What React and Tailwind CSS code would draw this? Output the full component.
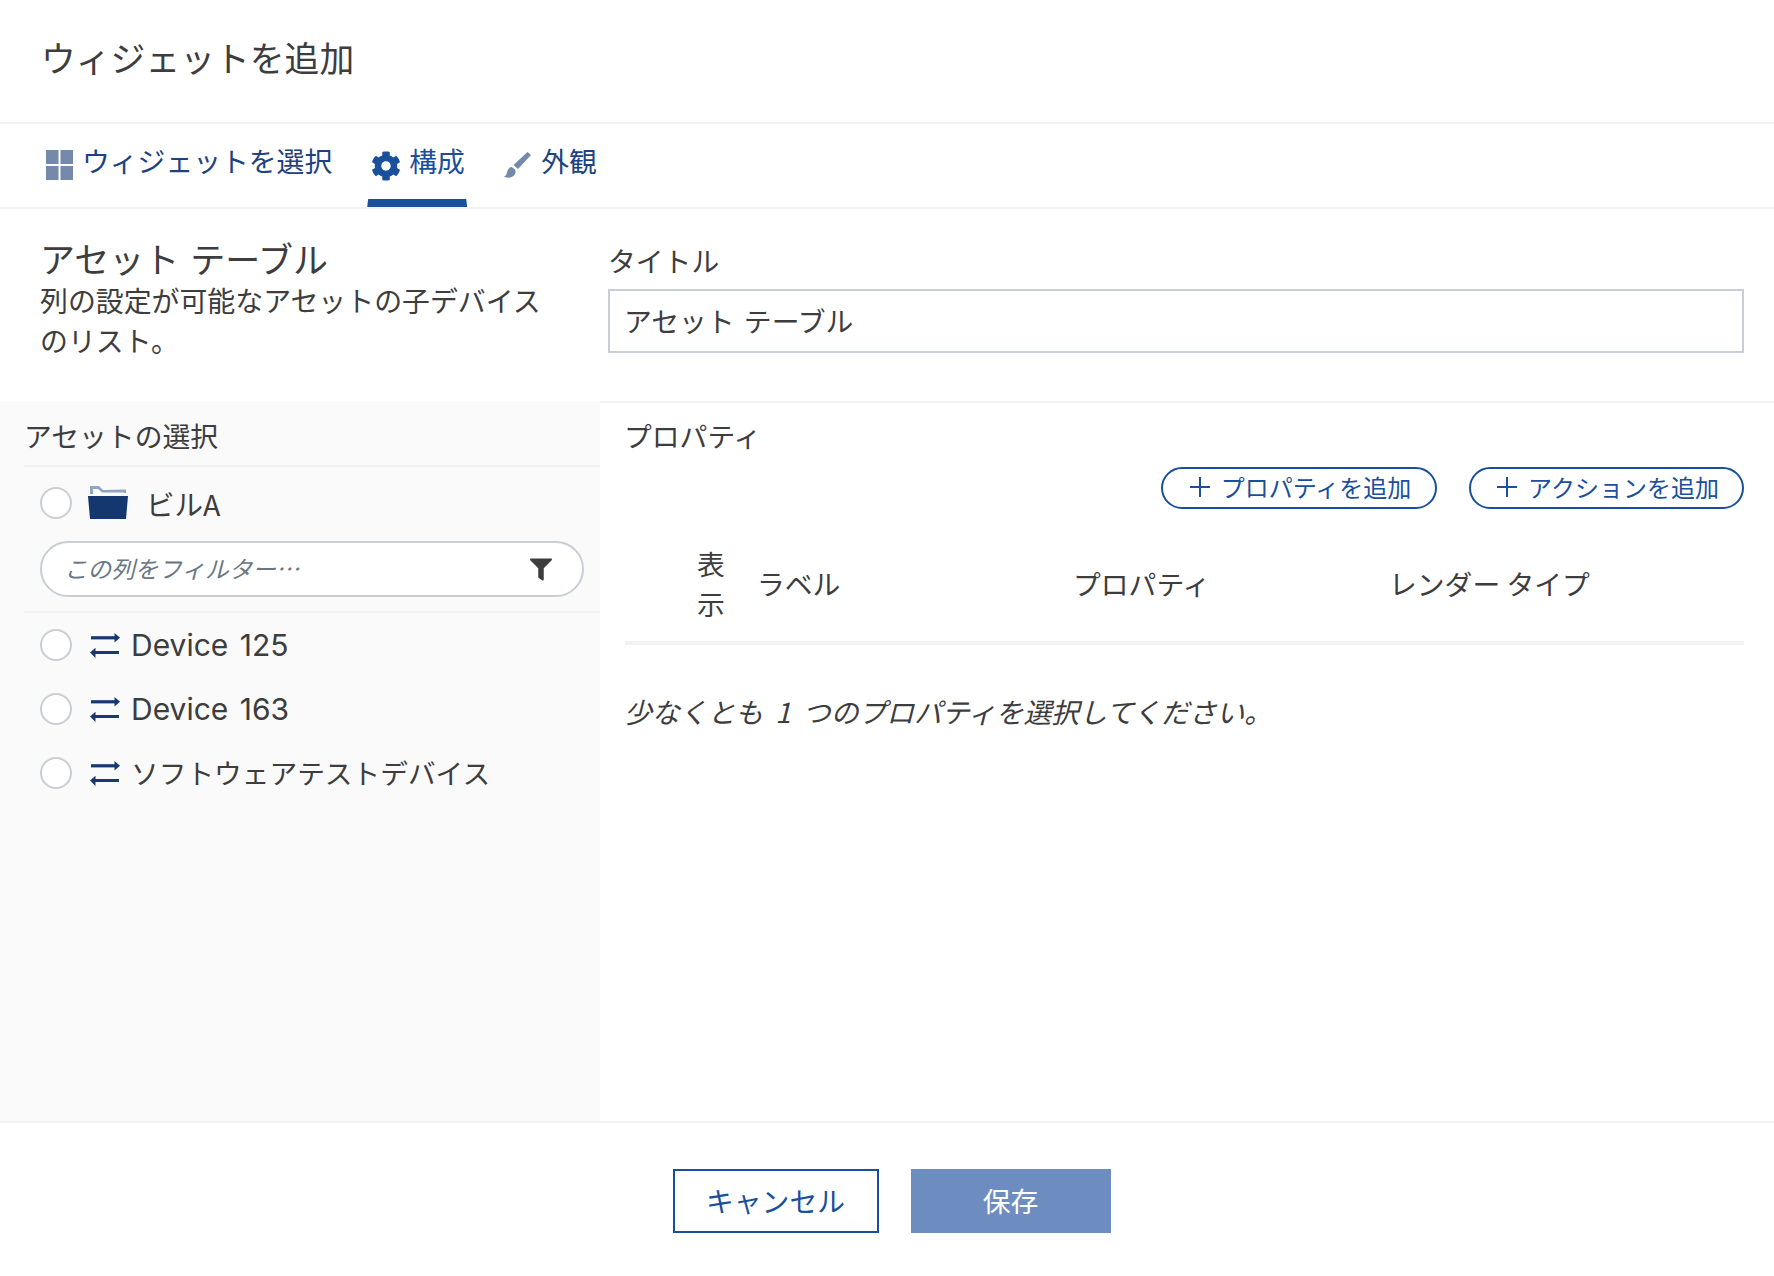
import React from "react";
import { FaCog, FaFilter } from "react-icons/fa";

const Radio = () => (
  <span className="block w-[32px] h-[32px] shrink-0 rounded-full border-2 border-[#c8ced4] bg-white" />
);

const Arrows = () => (
  <svg viewBox="0 0 30 25" className="w-[30px] h-[25px] shrink-0" fill="#17396f">
    <rect x="1" y="3.2" width="25" height="3.2" />
    <path d="M24.5 0 L30 4.8 L24.5 9.6 Z" />
    <rect x="4" y="18" width="25" height="3" />
    <path d="M5.5 14.8 L0 19.5 L5.5 25 Z" />
  </svg>
);

const Folder = () => (
  <svg viewBox="0 0 40 33" className="w-[40px] h-[33px] shrink-0">
    <path d="M2 0 H11 L15 4 L38 3.5 V7 H36 V6.5 L14 6.5 L10 3 H5 V8 H2 Z" fill="#8ea5c6" />
    <path d="M0 10 H40 L38 33 H2 Z" fill="#15376f" />
  </svg>
);

const Plus = () => (
  <svg viewBox="0 0 20 20" className="w-[20px] h-[20px] shrink-0" fill="none" stroke="#1a4f9c" strokeWidth="2">
    <path d="M10 0 V20 M0 10 H20" />
  </svg>
);

const Grid = () => (
  <svg viewBox="0 0 27 30" className="w-[27px] h-[30px] shrink-0" fill="#7589ab">
    <rect x="0" y="0" width="12.5" height="14" />
    <rect x="14.5" y="0" width="12.5" height="14" />
    <rect x="0" y="16" width="12.5" height="14" />
    <rect x="14.5" y="16" width="12.5" height="14" />
  </svg>
);

const Brush = () => (
  <svg viewBox="0 0 27 26" className="w-[27px] h-[26px] shrink-0" fill="#7589ab">
    <path d="M23.5 0 L27 3 L14 17 L9.5 13 Z" />
    <path d="M7.5 15 C4 15.5 3.5 19 2.5 22 C2 23.5 1 24 0 24.5 C3 26.5 9 26 11 22 C12 20 11.5 18 10.5 17 Z" />
  </svg>
);

export default function App() {
  return (
    <div
      className="w-[1774px] h-[1276px] bg-white text-[#3d3d3d] flex flex-col overflow-hidden [word-spacing:3px]"
      style={{ fontFamily: '"Noto Sans CJK JP", "Noto Sans", sans-serif' }}
    >
      <header className="h-[124px] shrink-0 border-b-2 border-[#f2f2f2] pl-[41px] pt-[32px]">
        <h1 className="text-[34.8px] leading-[50px] font-normal">ウィジェットを追加</h1>
      </header>

      <nav className="h-[85px] shrink-0 border-b-2 border-[#f2f2f2] flex pl-[37px] text-[27.8px] leading-none">
        <div className="flex items-center h-full pb-[8px] pl-[9px] pr-[8px] text-[#1d4280]">
          <span className="mt-[6px]"><Grid /></span>
          <span className="ml-[9px] -mt-[1px]">ウィジェットを選択</span>
        </div>
        <div className="relative flex items-center w-[100px] h-full pb-[8px] pl-[4px] ml-[27px] text-[#1a4f9c]">
          <FaCog className="w-[30px] h-[30px] mt-[8px] shrink-0" />
          <span className="ml-[8px] -mt-[1px] whitespace-nowrap">構成</span>
          <span className="absolute left-0 right-0 bottom-0 h-[8px] bg-[#1a4f9c] [clip-path:polygon(1%_0,99%_0,100%_100%,0_100%)]" />
        </div>
        <div className="flex items-center h-full pb-[8px] ml-[37px] text-[#1d4280]">
          <span className="mt-[6px]"><Brush /></span>
          <span className="ml-[10px] -mt-[1px]">外観</span>
        </div>
      </nav>

      <section className="h-[192px] shrink-0 flex">
        <div className="w-[608px] shrink-0 pl-[40px] pr-[46px] pt-[26px]">
          <h2 className="text-[35px] leading-[46px] font-normal">アセット テーブル</h2>
          <p className="text-[27.9px] leading-[40px] -mt-[1px]">列の設定が可能なアセットの子デバイスのリスト。</p>
        </div>
        <div className="flex-1 pr-[30px] pt-[31px]">
          <label className="block text-[27.8px] leading-[40px] mb-[9px]">タイトル</label>
          <div className="h-[64px] border-2 border-[#c8ced4] flex items-center pl-[14px] text-[27.8px] leading-none">
            アセット テーブル
          </div>
        </div>
      </section>

      <main className="flex-1 flex min-h-0">
        <aside className="w-[600px] shrink-0 bg-[#fafafa]">
          <div className="ml-[24px] h-[66px] border-b-2 border-[#f2f2f2] flex items-center pt-[6px] text-[27.8px] leading-none">
            アセットの選択
          </div>
          <div className="flex items-center h-[74px] pl-[40px]">
            <span className="-mt-[3px]"><Radio /></span>
            <span className="ml-[16px] mr-[18px] -mt-[4px]"><Folder /></span>
            <span className="text-[28.5px] leading-none mt-[1px]">ビルA</span>
          </div>
          <div className="pl-[40px] pr-[16px] mb-[14px]">
            <div className="h-[56px] rounded-full border-2 border-[#c8ced4] bg-white flex items-center justify-between pl-[22px] pr-[30px]">
              <span className="text-[23.6px] italic text-[#6a7683] leading-none">この列をフィルター…</span>
              <FaFilter className="w-[22px] h-[23px] text-[#3d3d3d]" />
            </div>
          </div>
          <div className="ml-[24px] h-[2px] bg-[#f2f2f2]" />
          <div>
            <div className="flex items-center h-[64px] pl-[40px]">
              <Radio />
              <span className="ml-[18px] mr-[11px]"><Arrows /></span>
              <span className="text-[30px] leading-none font-['Inter','Noto_Sans_CJK_JP',sans-serif]">Device 125</span>
            </div>
            <div className="flex items-center h-[64px] pl-[40px]">
              <Radio />
              <span className="ml-[18px] mr-[11px]"><Arrows /></span>
              <span className="text-[30px] leading-none font-['Inter','Noto_Sans_CJK_JP',sans-serif]">Device 163</span>
            </div>
            <div className="flex items-center h-[64px] pl-[40px]">
              <Radio />
              <span className="ml-[18px] mr-[11px]"><Arrows /></span>
              <span className="text-[27.7px] leading-none">ソフトウェアテストデバイス</span>
            </div>
          </div>
        </aside>

        <div className="flex-1 pl-[25px] pr-[30px] border-t-2 border-[#f2f2f2]">
          <div className="h-[64px] flex items-center pt-[2px] -ml-[1px] text-[27.8px] leading-none">プロパティ</div>
          <div className="flex justify-end gap-[32px]">
            <button className="flex items-center justify-center gap-[11px] w-[276px] h-[42px] pl-[3px] pb-[2px] rounded-full border-2 border-[#1a4f9c] text-[#1a4f9c] text-[24px] leading-none bg-white">
              <Plus />
              <span>プロパティを追加</span>
            </button>
            <button className="flex items-center justify-center gap-[11px] w-[275px] h-[42px] pl-[3px] pb-[2px] rounded-full border-2 border-[#1a4f9c] text-[#1a4f9c] text-[24px] leading-none bg-white">
              <Plus />
              <span>アクションを追加</span>
            </button>
          </div>
          <div className="mt-[34px] h-[102px] border-b-4 border-[#f2f2f2] flex items-center text-[27.8px] leading-[40px] pb-[18px]">
            <div className="w-[132px] shrink-0 pl-[72px]">
              <div className="w-[30px]">表示</div>
            </div>
            <div className="w-[316px] shrink-0">ラベル</div>
            <div className="w-[316px] shrink-0">プロパティ</div>
            <div className="[word-spacing:0px]">レンダー タイプ</div>
          </div>
          <p className="mt-[46px] -ml-[1px] text-[27.8px] leading-[40px] italic [word-spacing:6px]">少なくとも 1 つのプロパティを選択してください。</p>
        </div>
      </main>

      <footer className="h-[155px] shrink-0 border-t-2 border-[#f2f2f2] flex justify-center items-start gap-[32px] pt-[46px] pl-[9px]">
        <button className="w-[206px] h-[64px] border-2 border-[#1a4f9c] text-[#1a4f9c] text-[27.8px] leading-none bg-white">キャンセル</button>
        <button className="w-[200px] h-[64px] bg-[#6d8dc1] text-white text-[27.8px] leading-none">保存</button>
      </footer>
    </div>
  );
}
